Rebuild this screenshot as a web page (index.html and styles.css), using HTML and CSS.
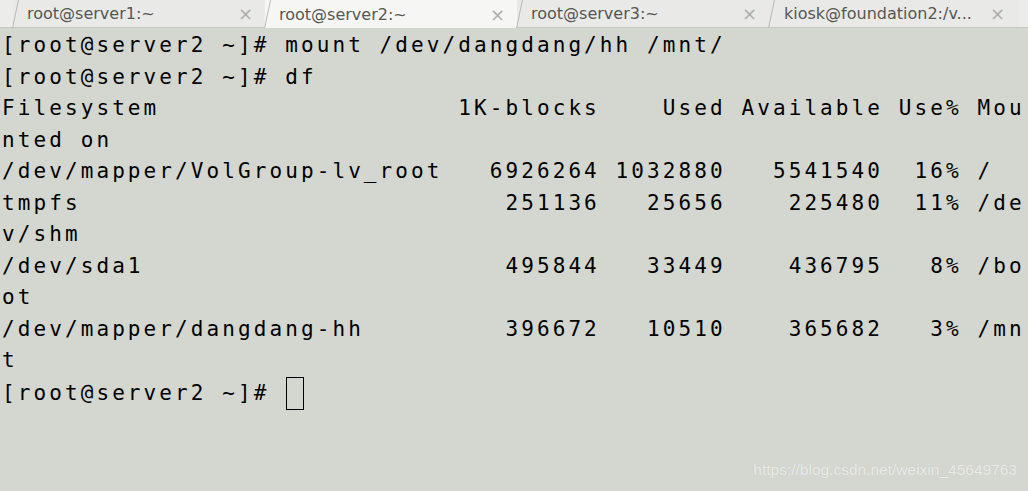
FILE: index.html
```html
<!DOCTYPE html>
<html>
<head>
<meta charset="utf-8">
<link rel="stylesheet" href="styles.css">
</head>
<body>
<div class="window">
  <div class="tabbar">
    <div class="tab"><span class="tab-title">root@server1:~</span><span class="tab-close">×</span></div>
    <div class="tab active"><span class="tab-title">root@server2:~</span><span class="tab-close">×</span></div>
    <div class="tab"><span class="tab-title">root@server3:~</span><span class="tab-close">×</span></div>
    <div class="tab last"><span class="tab-title">kiosk@foundation2:/v...</span><span class="tab-close">×</span></div>
  </div>
  <div class="terminal">
<pre class="screen">[root@server2 ~]# mount /dev/dangdang/hh /mnt/
[root@server2 ~]# df
Filesystem                   1K-blocks    Used Available Use% Mou
nted on
/dev/mapper/VolGroup-lv_root   6926264 1032880   5541540  16% /
tmpfs                           251136   25656    225480  11% /de
v/shm
/dev/sda1                       495844   33449    436795   8% /bo
ot
/dev/mapper/dangdang-hh         396672   10510    365682   3% /mn
t
[root@server2 ~]# <span class="cursor"> </span></pre>
    <div class="watermark">https://blog.csdn.net/weixin_45649763</div>
  </div>
</div>
</body>
</html>
```
FILE: styles.css
```css
html, body {
  margin: 0;
  padding: 0;
  width: 1028px;
  height: 491px;
  overflow: hidden;
  background: #d3d7cf;
}
.window {
  display: flex;
  flex-direction: column;
  height: 491px;
}
.tabbar {
  display: flex;
  height: 27px;
  padding-left: 13px;
  background: #ececeb;
  border-bottom: 1px solid #c4c6c1;
  font-family: "DejaVu Sans", sans-serif;
  font-size: 16px;
  color: #555753;
}
.tab {
  position: relative;
  display: flex;
  align-items: center;
  justify-content: space-between;
  width: 252px;
  padding: 0 12px 0 14px;
  box-sizing: border-box;
  background: #e9e9e8;
}
.tab::before {
  content: "";
  position: absolute;
  left: 2px;
  top: 0;
  bottom: -1px;
  width: 1px;
  background: #b9bab6;
  transform: skewX(-12deg);
}
.tab.active {
  background: #f6f6f5;
  margin-bottom: -1px;
}
.tab.last {
  width: 250px;
  padding-left: 15px;
  padding-right: 14px;
}
.tab-title {
  white-space: nowrap;
}
.tab-close {
  color: #aeafac;
  font-size: 18px;
}
.terminal {
  position: relative;
  flex: 1;
  background: #d3d7cf;
}
.screen {
  margin: 0;
  padding: 2px 0 0 2px;
  font-family: "DejaVu Sans Mono", monospace;
  font-size: 21px;
  letter-spacing: 3.09px;
  line-height: 31.5px;
  color: #000;
  white-space: pre;
}
.cursor {
  display: inline-block;
  width: 18px;
  height: 33px;
  margin-left: 1px;
  border: 1px solid #000;
  box-sizing: border-box;
  vertical-align: 0;
  letter-spacing: 0;
}
.watermark {
  position: absolute;
  right: 11px;
  bottom: 12px;
  font-family: "Liberation Sans", Arial, sans-serif;
  font-size: 15.5px;
  color: rgba(255, 255, 255, 0.7);
  text-shadow: 0 0 1px rgba(0, 0, 0, 0.12);
}
```
